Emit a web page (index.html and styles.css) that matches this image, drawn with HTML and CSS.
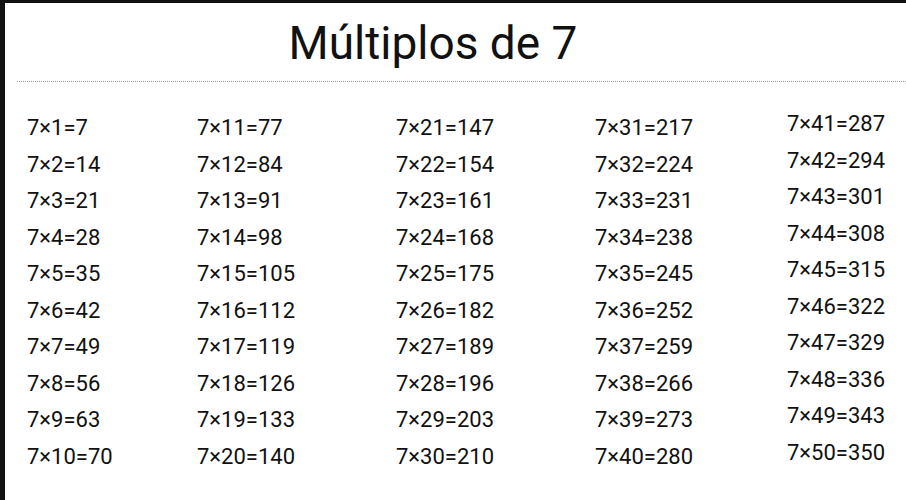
FILE: index.html
```html
<!DOCTYPE html>
<html>
    <head>
        <title>Múltiplos de 7</title>
        <link rel="stylesheet" href="styles.css">
    </head>
    <body>
        <div class="page">
            <p class="title">Múltiplos de 7</p>
            <div class="table js-table"></div>
        </div>

        <script>
            const table = document.querySelector('.js-table');
            let html = '';

            for(let col = 0; col < 5; col++){
                html += `<div class="col col-${col + 1}">`;
                for(let i = 1; i <= 10; i++){
                    const n = col * 10 + i;
                    html += `<p class="item">7×${n}=${7 * n}</p>`;
                }
                html += '</div>';
            }

            table.innerHTML = html;
        </script>
    </body>
</html>
```

FILE: styles.css
```css
body{
    margin:0;
    background-color:white;
    color:#111;
    font-family:Roboto, "Liberation Sans", sans-serif;
}

.page{
    height:497px;
    border-top:3px solid #111;
    border-left:5px solid #111;
}

.title{
    margin:0 0 0 12px;
    padding:14px 57px 14px 0;
    height:50px;
    line-height:52px;
    border-bottom:1px dotted #999;
    text-align:center;
    font-size:46px;
}

.table{
    display:grid;
    grid-template-columns:170px 199px 199px 192px auto;
    padding-left:22px;
    padding-top:28px;
}

.item{
    margin:0;
    height:36.5px;
    line-height:36.5px;
    font-size:22px;
}

.col-5{
    margin-top:-4px;
}
```
